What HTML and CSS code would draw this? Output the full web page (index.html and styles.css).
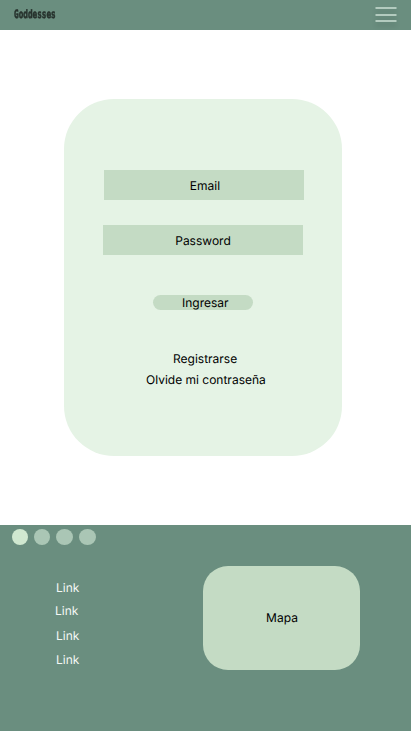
FILE: index.html
```html
<!DOCTYPE html>
<html lang="es">
<head>
<meta charset="utf-8">
<title>Goddesses</title>
<link rel="stylesheet" href="styles.css">
</head>
<body>
<header class="topbar">
  <span class="logo">Goddesses</span>
  <svg class="menu" width="30" height="30" viewBox="0 0 30 30" aria-label="Menu">
    <path d="M4.5 8h21M4.5 15h21M4.5 21h21" stroke="#b3cbbf" stroke-width="2"/>
  </svg>
</header>
<main class="content">
  <form class="card">
    <div class="field email">Email</div>
    <div class="field password">Password</div>
    <div class="submit">Ingresar</div>
    <a class="register">Registrarse</a>
    <a class="forgot">Olvide mi contraseña</a>
  </form>
</main>
<footer class="footer">
  <div class="dots">
    <span class="dot active"></span>
    <span class="dot"></span>
    <span class="dot wide"></span>
    <span class="dot wide"></span>
  </div>
  <div class="columns">
    <nav class="links">
      <a>Link</a>
      <a class="second">Link</a>
      <a class="third">Link</a>
      <a>Link</a>
    </nav>
    <div class="map">Mapa</div>
  </div>
</footer>
</body>
</html>
```
FILE: styles.css
```css
* { box-sizing: border-box; }
body {
  margin: 0;
  width: 411px;
  height: 731px;
  overflow: hidden;
  display: flex;
  flex-direction: column;
  background: #fff;
  color: #000;
  font: 12px/15px Inter, sans-serif;
  text-rendering: geometricPrecision;
}
.topbar {
  height: 30px;
  padding: 0 10px 0 14px;
  display: flex;
  justify-content: space-between;
  background: #6a8e7f;
}
.logo {
  font: bold 11.5px/28px "DejaVu Sans Mono", monospace;
  color: #27332e;
  -webkit-text-stroke: 0.6px #27332e;
  transform: scaleX(0.67);
  transform-origin: left;
}
.menu { filter: drop-shadow(0 4px 2px rgba(0, 0, 0, 0.12)); }
.content {
  height: 495px;
  padding: 69px 0 0 64px;
}
.card {
  width: 278px;
  height: 357px;
  padding-top: 71px;
  display: flex;
  flex-direction: column;
  border-radius: 50px;
  background: #e5f3e5;
}
.field {
  width: 200px;
  height: 30px;
  display: flex;
  align-items: center;
  justify-content: center;
  background: #c4dbc4;
}
.email { margin-left: 40px; padding-left: 2px; }
.password { margin: 25px 0 0 39px; }
.submit {
  width: 100px;
  height: 15px;
  margin: 40px 0 0 89px;
  padding-left: 29px;
  border-radius: 8px;
  background: #c4dbc4;
}
.register { margin: 41px 0 0 109px; }
.forgot { margin: 6px 0 0 82px; }
.footer {
  height: 206px;
  padding-top: 4px;
  background: #6a8e7f;
}
.dots {
  height: 16px;
  padding-left: 12px;
  display: flex;
  gap: 6px;
}
.dot {
  width: 16px;
  height: 16px;
  border-radius: 50%;
  background: #aac6b5;
}
.active { background: #d0e8d0; }
.wide { width: 17px; }
.columns {
  display: flex;
  justify-content: space-between;
  padding: 21px 51px 0 56px;
}
.links {
  padding-top: 14px;
  display: flex;
  flex-direction: column;
  gap: 9px;
  color: #f4f8f5;
}
.second { margin: -1px 0 0 -1px; }
.third { margin-top: 1px; }
.map {
  width: 157px;
  height: 104px;
  padding: 0 0 1px 1px;
  display: flex;
  align-items: center;
  justify-content: center;
  border-radius: 25px;
  background: #c4dbc4;
}
```
